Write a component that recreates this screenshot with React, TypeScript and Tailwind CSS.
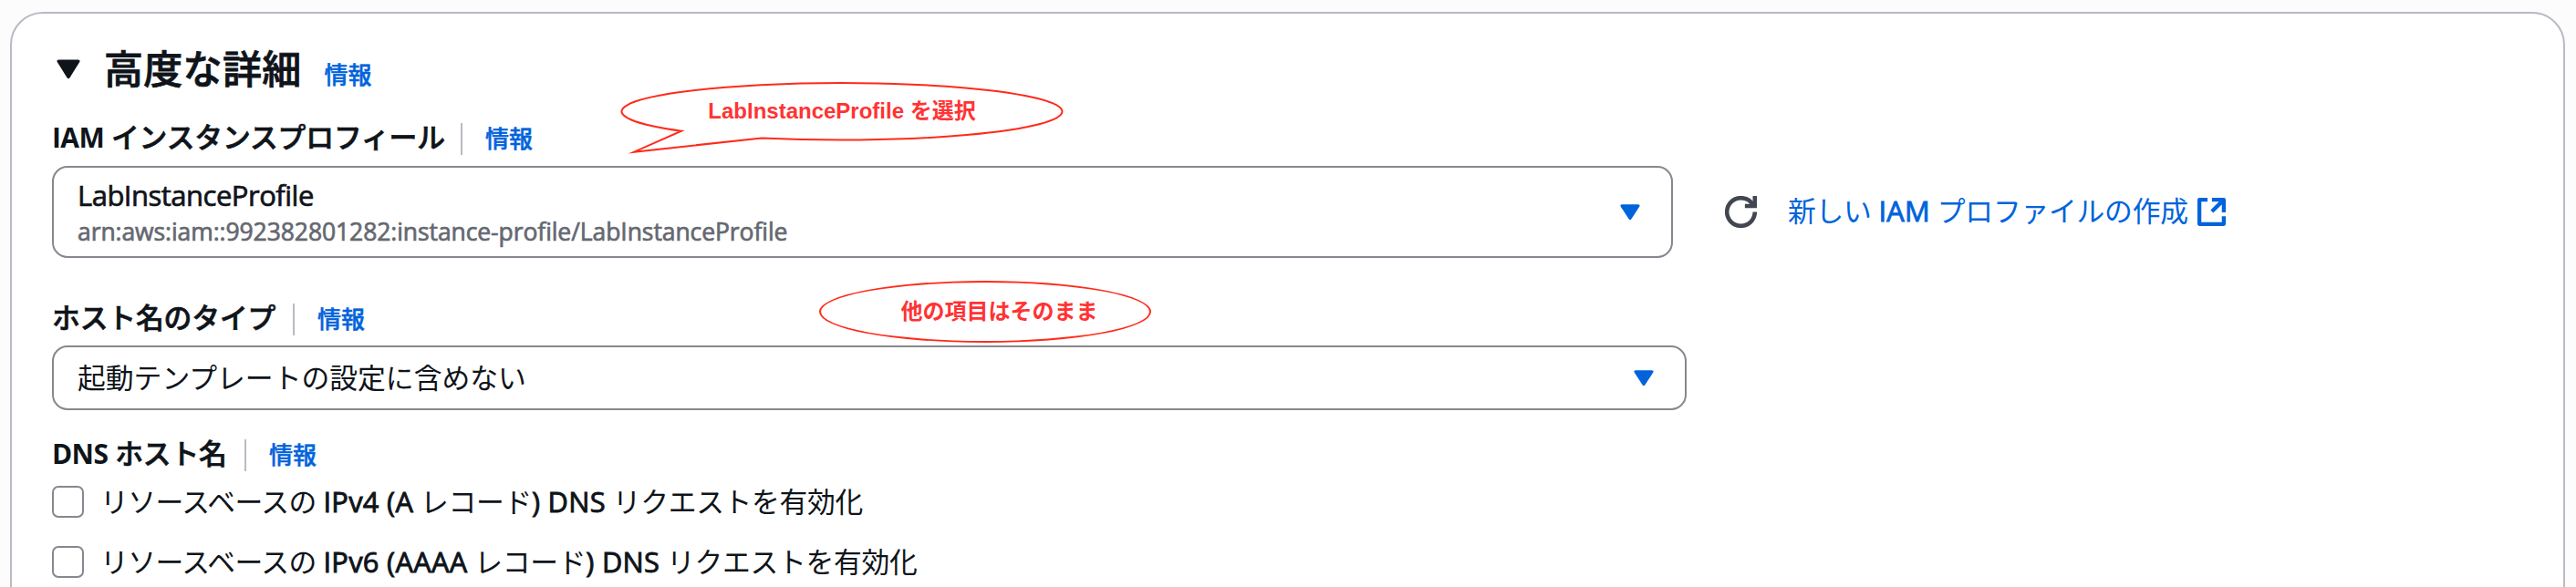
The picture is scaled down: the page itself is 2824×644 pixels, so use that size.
import React from "react";

function Caret({ className, width, height }: { className: string; width: number; height: number }) {
  return (
    <svg className={"shrink-0 " + className} width={width} height={height} viewBox="0 0 28 26" preserveAspectRatio="none" fill="currentColor">
      <path d="M2.6 0.5H25.4Q28.6 0.9 27 3.8L15.8 23.6Q14 26.4 12.2 23.6L1 3.8Q-0.6 0.9 2.6 0.5Z" />
    </svg>
  );
}

function Info({ className = "" }: { className?: string }) {
  return (
    <a className={"text-[26px] leading-[40px] font-['Open_Sans','Noto_Sans_CJK_JP',sans-serif] font-medium [-webkit-text-stroke:0.5px] text-[#0063dc] whitespace-nowrap " + className}>
      情報
    </a>
  );
}

function FieldLabel({ children, width }: { children: React.ReactNode; width: string }) {
  return (
    <div className="flex h-[40px] items-center">
      <div className={"-mt-[4px] shrink-0 whitespace-nowrap text-[30.8px] leading-[40px] font-medium tracking-[-0.15px] [-webkit-text-stroke:0.7px] " + width}>
        {children}
      </div>
      <div className="mt-[1px] mr-[25px] h-[35px] w-[2px] bg-[#b9bac4]" />
      <Info />
    </div>
  );
}

function Strong({ children }: { children: React.ReactNode }) {
  return <span className="text-[30px] font-bold tracking-[-0.6px] [-webkit-text-stroke:0px]">{children}</span>;
}

function Latin({ children }: { children: React.ReactNode }) {
  return <span className="tracking-[0.3px] [-webkit-text-stroke:0.9px]">{children}</span>;
}

function CheckRow({ children }: { children: React.ReactNode }) {
  return (
    <div className="flex h-[66px] items-start">
      <div className="h-[35px] w-[35px] rounded-[7px] border-2 border-[#87878f] bg-white" />
      <div className="-mt-[3px] ml-[18px] whitespace-nowrap text-[30.8px] leading-[40px] tracking-[-0.3px]">{children}</div>
    </div>
  );
}

export default function App() {
  return (
    <div className="relative h-[644px] w-[2824px] overflow-hidden bg-[#fcfcfd] px-[11px] pt-[13px] font-['Open_Sans','Noto_Sans_CJK_JP',sans-serif] text-[#0f141a]">
      <div className="h-[700px] w-[2801px] rounded-[36px] border-2 border-[#b9bac4] bg-white pl-[44px] pt-[31px]">
        <div className="flex h-[60px] items-center">
          <Caret className="ml-[5px]" width={26} height={22} />
          <h2 className="ml-[26px] text-[43px] leading-[60px] font-medium tracking-[0.3px] [-webkit-text-stroke:0.8px]">高度な詳細</h2>
          <Info className="mt-[12px] ml-[25px]" />
        </div>
        <div className="mt-[26px]">
          <FieldLabel width="w-[448px]">
            <Strong>IAM</Strong> インスタンスプロフィール
          </FieldLabel>
        </div>
        <div className="mt-[10px] flex items-center">
          <div className="flex h-[101px] w-[1777px] items-center justify-between rounded-[17px] border-2 border-[#87878f] pr-[34px] pl-[26px]">
            <div className="pt-[3px]">
              <div className="text-[31px] leading-[40px] tracking-[-0.5px] [-webkit-text-stroke:0.7px]">LabInstanceProfile</div>
              <div className="text-[26.5px] leading-[40px] tracking-[-0.08px] text-[#656871] [-webkit-text-stroke:0.7px]">
                arn:aws:iam::992382801282:instance-profile/LabInstanceProfile
              </div>
            </div>
            <Caret className="text-[#0063dc]" width={22} height={18} />
          </div>
          <svg className="ml-[57px] shrink-0 text-[#424650]" width="35" height="35" viewBox="0 0 16 16" fill="none" stroke="currentColor" strokeWidth="2.1">
            <path d="M15 8c0 3.87-3.13 7-7 7s-7-3.13-7-7 3.13-7 7-7c2.79 0 5.2 1.63 6.33 4" />
            <path d="M10 5h5V0" />
          </svg>
          <a className="-mt-[4px] ml-[34px] w-[449px] shrink-0 whitespace-nowrap text-[30.8px] leading-[40px] tracking-[-0.25px] text-[#0063dc]">
            新しい <Latin>IAM</Latin> プロファイルの作成
          </a>
          <svg className="shrink-0 text-[#0063dc]" width="31" height="31" viewBox="0 0 16 16" fill="none" stroke="currentColor" strokeWidth="2.2" strokeLinejoin="round">
            <path d="M5.7 1.1H1.1V14.9H14.9V10.5" />
            <path d="M8.2 1.1H14.9V8.2M14.9 1.1L8.2 7.8" />
          </svg>
        </div>
        <div className="mt-[47px]">
          <FieldLabel width="w-[264px]">ホスト名のタイプ</FieldLabel>
        </div>
        <div className="mt-[9px] flex h-[71px] w-[1792px] items-center justify-between rounded-[17px] border-2 border-[#87878f] pr-[34px] pl-[26px]">
          <div className="pb-px text-[30.8px] leading-[40px]">起動テンプレートの設定に含めない</div>
          <Caret className="text-[#0063dc]" width={22} height={18} />
        </div>
        <div className="mt-[29px]">
          <FieldLabel width="w-[211px]">
            <Strong>DNS</Strong> ホスト名
          </FieldLabel>
        </div>
        <div className="mt-[14px]">
          <CheckRow>
            <span className="tracking-[-0.55px]">リソースベースの</span> <Latin>IPv4 (A</Latin> レコード<Latin>) DNS</Latin> リクエストを有効化
          </CheckRow>
          <CheckRow>
            <span className="tracking-[-0.55px]">リソースベースの</span> <Latin>IPv6 (AAAA</Latin> レコード<Latin>) DNS</Latin> リクエストを有効化
          </CheckRow>
        </div>
      </div>
      <div className="absolute top-[88px] left-[678px] flex h-[84px] w-[490px] justify-center pt-[17px] text-[#ff3333]">
        <svg className="absolute top-0 left-0" width="490" height="84" fill="none" stroke="#ff2a1a" strokeWidth="2" strokeMiterlimit="10">
          <path d="M69 55.7A241.5 31.25 0 1 1 157 63.4L17 78.7Z" />
        </svg>
        <span className="font-['Liberation_Sans','Noto_Sans_CJK_JP',sans-serif] text-[24px] leading-[34px] font-bold whitespace-nowrap">LabInstanceProfile を選択</span>
      </div>
      <div className="absolute top-[308px] left-[898px] flex h-[68px] w-[364px] items-center justify-center rounded-[50%] border-2 border-[#ff2a1a] pb-[3px] pl-[31px] text-[24px] leading-[34px] font-bold text-[#ff3333]">
        他の項目はそのまま
      </div>
    </div>
  );
}
